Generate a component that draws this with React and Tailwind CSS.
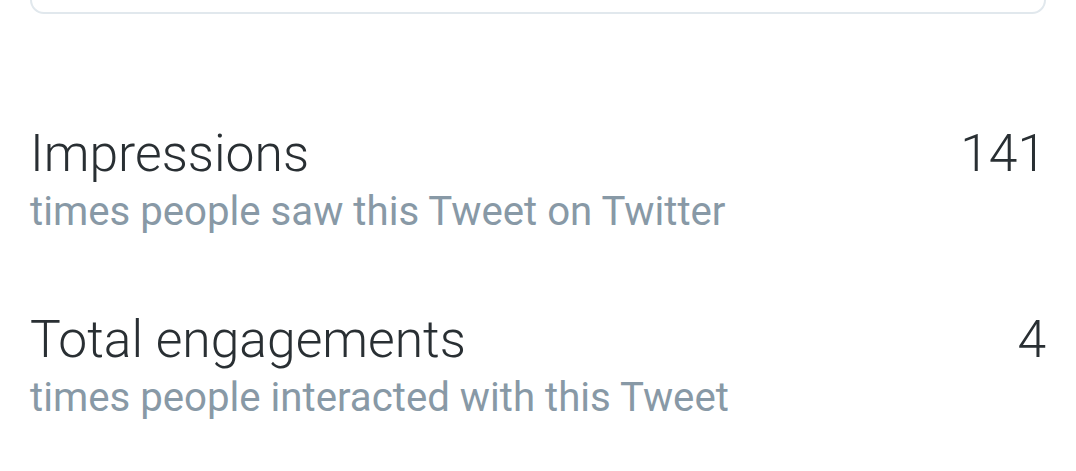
import React from 'react';

const stats = [
  { label: 'Impressions', value: '141', note: 'times people saw this Tweet on Twitter' },
  { label: 'Total engagements', value: '4', note: 'times people interacted with this Tweet' },
];

const App = () => {
  return (
    <div className="min-h-[471px] bg-white font-['Roboto',sans-serif] overflow-hidden">
      <div className="mx-[30px] -mt-[40px] h-[54px] rounded-b-[14px] border-2 border-[#e1e8ed] bg-white" />
      <div className="px-[30px] pt-[110px] flex flex-col gap-[75px]">
        {stats.map(s => (
          <div key={s.label} className="flex flex-col gap-[5px]">
            <div className="flex justify-between items-baseline">
              <span className="text-[51.6px] leading-[60px] font-light text-[#292f33]">{s.label}</span>
              <span className="text-[51.6px] leading-[60px] font-light text-[#292f33]">{s.value}</span>
            </div>
            <div className="text-[40.2px] leading-[46px] text-[#8899a6]">{s.note}</div>
          </div>
        ))}
      </div>
    </div>
  );
};

export default App;
